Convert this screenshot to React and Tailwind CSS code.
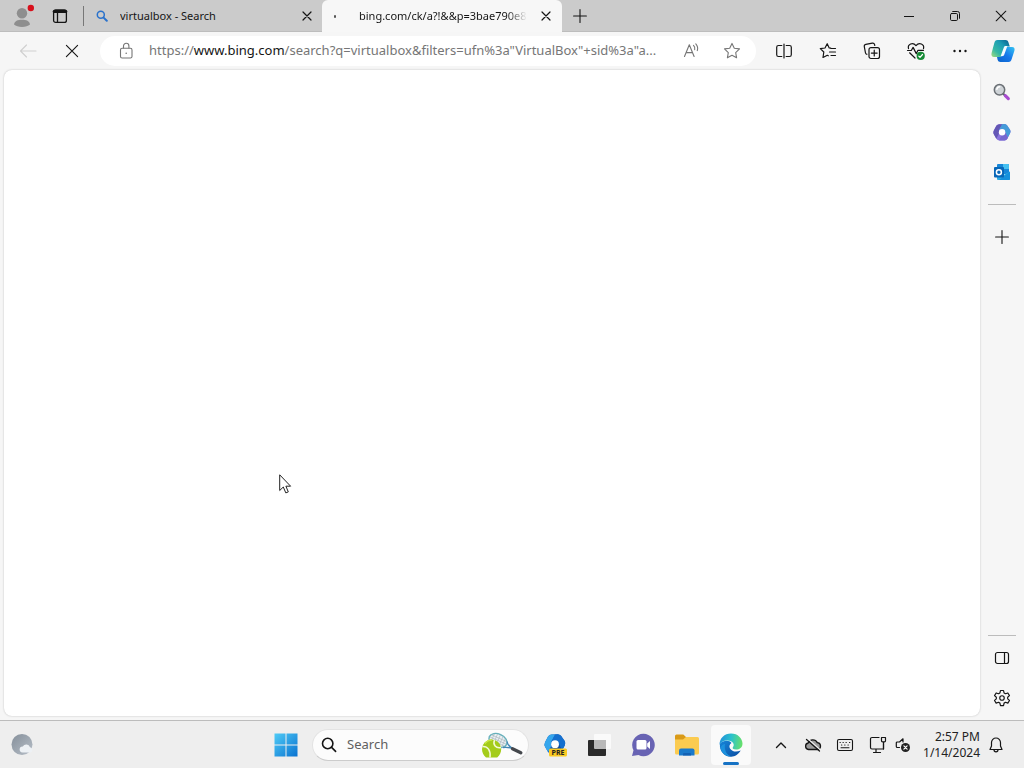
import React from "react";

const line = {
  fill: "none",
  stroke: "currentColor",
  strokeLinecap: "round",
  strokeLinejoin: "round",
};

function IconButton({ label, className = "", children }) {
  return (
    <button type="button" aria-label={label} className={`flex shrink-0 items-center justify-center ${className}`}>
      {children}
    </button>
  );
}

function CloseGlyph({ className = "h-2.5 w-2.5", weight = 1.2 }) {
  return (
    <svg viewBox="0 0 10 10" className={className} {...line} strokeWidth={weight}>
      <path d="M1 1 9 9M9 1 1 9" />
    </svg>
  );
}

function PlusGlyph() {
  return (
    <svg viewBox="0 0 14 14" className="h-3.5 w-3.5" {...line} strokeWidth="1.1">
      <path d="M7 .6V13.4M.6 7H13.4" />
    </svg>
  );
}

function ProfileIcon() {
  return (
    <svg viewBox="0 0 24 24" className="ml-0.5 h-6 w-6">
      <circle cx="11" cy="9.2" r="5.2" fill="#8e8e8e" />
      <path d="M3 20.500c.5-3.600 3.700-4.800 8-4.800s7.500 1.200 8 4.800c-1.800 1.500-4.600 2.500-8 2.500s-6.200-1-8-2.500Z" fill="#8e8e8e" />
      <circle cx="19.800" cy="4" r="3.200" fill="#d8101c" />
    </svg>
  );
}

function TabActionsIcon() {
  return (
    <svg viewBox="0 0 16 16" className="h-4 w-4" {...line} strokeWidth="1.300">
      <rect x="1.600" y="1.800" width="12.800" height="12.600" rx="2" />
      <path d="M2.200 3.500H13.800" strokeWidth="3" />
      <path d="M5.500 4V14.200" />
    </svg>
  );
}

function BlueSearchIcon() {
  return (
    <svg viewBox="0 0 12 12" className="h-3 w-3 shrink-0" fill="none" stroke="#2a72cc" strokeLinecap="round">
      <circle cx="4.800" cy="4.800" r="3.500" strokeWidth="1.500" />
      <path d="M7.600 7.600 10.800 10.800" strokeWidth="2" />
    </svg>
  );
}

function CopilotIcon() {
  return (
    <svg viewBox="0 0 24 24" className="h-6 w-6">
      <defs>
        <linearGradient id="cpA" x1="0" y1="1" x2="1" y2="0">
          <stop offset="0" stopColor="#a5dc7b" />
          <stop offset=".3" stopColor="#35b9a5" />
          <stop offset=".65" stopColor="#1c9cb4" />
          <stop offset="1" stopColor="#075a8c" />
        </linearGradient>
        <linearGradient id="cpB" x1="0" y1="1" x2="1" y2="0">
          <stop offset="0" stopColor="#0a63c9" />
          <stop offset=".5" stopColor="#1677ea" />
          <stop offset="1" stopColor="#35c4f2" />
        </linearGradient>
      </defs>
      <path d="M17.600 23H9.500c-1.600 0-2.400-.700-2.900-2.200L5.800 17H12l3-9h6c2.300 0 3 1.600 2.400 3.700L20.700 20c-.5 1.800-1.400 3-3.100 3Z" fill="url(#cpB)" />
      <path d="M6.400 1H14.500c1.600 0 2.400.7 2.900 2.200l1.400 4.300H14l-3.200 8.700c-.5 1.300-1.300 1.800-2.800 1.800H3C.7 18 0 16.200.6 14L3.300 4C3.800 2.200 4.700 1 6.400 1Z" fill="url(#cpA)" />
      <path d="M12.900 8.200c.3-.9.9-1.300 1.900-1.300h1.600l-3.100 8.700c-.4 1.200-1.200 1.700-2.300 1.700H9.600Z" fill="#f5fbff" />
    </svg>
  );
}

function MagnifierIcon() {
  return (
    <svg viewBox="0 0 18 18" className="h-[18px] w-[18px]">
      <path d="m9.800 10.200 3 3" stroke="#59606b" strokeWidth="2" />
      <path d="m12.300 12.600 3 3" stroke="#a84cd0" strokeWidth="3.200" strokeLinecap="round" />
      <circle cx="6.500" cy="6.800" r="5.200" fill="#ced3d7" stroke="#6b7075" strokeWidth="1.500" />
      <path d="M3.800 6.300a3 3 0 0 1 3-2.500" stroke="#fff" strokeWidth="1.400" fill="none" strokeLinecap="round" />
    </svg>
  );
}

function Microsoft365Icon({ blue = false }) {
  return (
    <>
      <path d="M6.500 1.200 12 1q1.500 0 2.800 1.400L18 7q1 1.800 0 3.800L15.200 16.500q-1.200 1.800-3 2H6.500q-1.800-.2-3-2L.9 12q-1-1.800 0-4L3.500 3Q4.700 1.200 6.500 1.200Z" fill={blue ? "#135fbd" : "#8a74dd"} />
      <path d="M6.500 1.200H10L6.600 7 6 12 3.500 16.500.9 12q-1-1.800 0-4L3.500 3Q4.700 1.200 6.500 1.200Z" fill={blue ? "#35a6ec" : "#6457b5"} />
      <path d="M9.500 1.200 12 1q1.500 0 2.800 1.400L18 7q1 1.800 0 3.800l-2.400 4.400-2.700-5.400L9 6.200 6.300 7.500Z" fill={blue ? "#1570cf" : "#459bd8"} />
      <path d="m13 9.600 2.600 5.600-.4 1.300q-1.200 1.800-3 2H6.500L9 13.300Z" fill={blue ? "#0d4da6" : "#7769d0"} />
      <circle cx="9.600" cy="9.700" r="3.400" fill="#fff" />
    </>
  );
}

function OutlookIcon() {
  return (
    <svg viewBox="0 0 18 18" className="h-[18px] w-[18px]">
      <rect x="4" y="1" width="12" height="10" rx="1" fill="#1686d8" />
      <path d="M10 1h5a1 1 0 0 1 1 1v4h-6Z" fill="#45c0f1" />
      <path d="M4 8.500 10.500 12 17 8.500V16a1 1 0 0 1-1 1H5a1 1 0 0 1-1-1Z" fill="#2caae4" />
      <path d="M17 8.500V16a1 1 0 0 1-1 1H6Z" fill="#1590dc" />
      <rect x="1" y="4" width="10" height="10.500" rx="1" fill="#0867b8" />
      <circle cx="5.900" cy="9.200" r="2.500" fill="none" stroke="#fff" strokeWidth="1.500" />
    </svg>
  );
}

function BrowserTabs() {
  return (
    <header className="flex h-8 items-stretch bg-[#cbcbcb] shadow-[inset_0_-1px_0_#bdbdbd]">
      <IconButton label="Profile" className="w-11">
        <ProfileIcon />
      </IconButton>
      <IconButton label="Tab actions menu" className="w-8">
        <TabActionsIcon />
      </IconButton>
      <div className="my-1.5 ml-[7px] w-px bg-[#777]" />
      <div role="tablist" className="flex min-w-0">
        <div className="flex w-[238px] min-w-0 items-center pl-3">
          <button type="button" role="tab" aria-selected="false" className="flex min-w-0 flex-1 items-center gap-3 text-left text-[11px]">
            <BlueSearchIcon />
            <span className="truncate">virtualbox - Search</span>
          </button>
          <IconButton label="Close virtualbox - Search" className="w-[30px]">
            <CloseGlyph />
          </IconButton>
        </div>
        <div className="flex w-60 min-w-0 items-center rounded-t-md bg-[#f7f7f7] pl-3">
          <button type="button" role="tab" aria-selected="true" className="flex min-w-0 flex-1 items-center gap-[23px] text-left text-[11px]">
            <span className="h-[3px] w-0.5 shrink-0 rounded-full bg-[#555]" />
            <span className="overflow-hidden whitespace-nowrap [mask-image:linear-gradient(to_right,black_88%,transparent)]">
              bing.com/ck/a?!&amp;&amp;p=3bae790e8
            </span>
          </button>
          <IconButton label="Close bing.com" className="w-8">
            <CloseGlyph />
          </IconButton>
        </div>
      </div>
      <IconButton label="New tab" className="w-9">
        <PlusGlyph />
      </IconButton>
      <div className="ml-auto flex">
        <IconButton label="Minimize" className="w-[46px]">
          <svg viewBox="0 0 10 10" className="h-2.5 w-2.5" stroke="currentColor">
            <path d="M0 5.500H10" />
          </svg>
        </IconButton>
        <IconButton label="Restore" className="w-[46px]">
          <svg viewBox="0 0 12 12" className="h-3 w-3" {...line}>
            <rect x="1.500" y="3.500" width="7" height="7" rx="1.200" />
            <path d="M3.700 1.500H8.500a2 2 0 0 1 2 2V8.300" />
          </svg>
        </IconButton>
        <IconButton label="Close window" className="w-[46px]">
          <CloseGlyph className="h-3 w-3" weight={0.9} />
        </IconButton>
      </div>
    </header>
  );
}

function AddressBar() {
  const url = 'https://www.bing.com/search?q=virtualbox&filters=ufn%3a"VirtualBox"+sid%3a"a...';
  return (
    <div className="flex h-[30px] min-w-0 flex-1 items-center rounded-full bg-white pl-[15px] text-[#767676]">
      <IconButton label="View site information" className="w-[22px]">
        <svg viewBox="0 0 16 18" className="h-[18px] w-4" {...line} strokeWidth="1.100">
          <rect x="2.500" y="6.300" width="11.500" height="9.700" rx="1.600" />
          <path d="M5.500 6V4a2.700 2.700 0 0 1 5.400 0V6" />
          <circle cx="8.200" cy="11.200" r=".8" fill="currentColor" stroke="none" />
        </svg>
      </IconButton>
      <label className="relative ml-3 min-w-0 flex-1 text-[13px]">
        <span className="block overflow-hidden whitespace-nowrap">
          https://<span className="text-[#151515]">www.bing.com</span>
          {'/search?q=virtualbox&filters=ufn%3a"VirtualBox"+sid%3a"a...'}
        </span>
        <input
          aria-label="Address and search bar"
          defaultValue={url}
          className="absolute inset-0 w-full bg-white opacity-0 outline-none focus:opacity-100"
        />
      </label>
      <IconButton label="Read aloud" className="w-10">
        <svg viewBox="0 0 18 18" className="h-[18px] w-[18px]" {...line} strokeWidth="1.100">
          <path d="M1.500 14.500 6.300 2.800 11.100 14.500M3.100 10.600H9.500" />
          <path d="M10.500 3.400a4.200 4.200 0 0 1 1.200 4.200M12.800 1.800a7 7 0 0 1 1.500 6.800" />
        </svg>
      </IconButton>
      <IconButton label="Add to favorites" className="mr-1 w-10">
        <svg viewBox="0 0 18 18" className="h-[18px] w-[18px]" {...line} strokeWidth="1.100">
          <path d="m9 1.400 2.300 4.800 5.200.7-3.800 3.700.9 5.200L9 13.300l-4.600 2.500.9-5.200L1.500 6.900l5.200-.7Z" />
        </svg>
      </IconButton>
    </div>
  );
}

const toolIcons = [
  [
    "Split screen",
    <svg viewBox="0 0 18 18" className="h-[18px] w-[18px]" {...line} strokeWidth="1.200">
      <path d="M9 2V16M6.800 3.500H3.500a1.800 1.800 0 0 0-1.800 1.800v7.400a1.800 1.800 0 0 0 1.800 1.800h3.300M11.200 3.500h3.300a1.800 1.800 0 0 1 1.800 1.800v7.400a1.800 1.800 0 0 1-1.800 1.800h-3.300" />
    </svg>,
  ],
  [
    "Favorites",
    <svg viewBox="0 0 18 18" className="h-[18px] w-[18px]" {...line} strokeWidth="1.200">
      <path d="M11.700 6.200 10.200 5.900 8.200 1.700 6 6 1.300 6.600l3.500 3.400-.8 5.500 4.300-2.200 1 .5M12 6.500H16.500M10.500 10H16.500M12 13.500H16.500" />
    </svg>,
  ],
  [
    "Collections",
    <svg viewBox="0 0 18 18" className="h-[18px] w-[18px]" {...line} strokeWidth="1.200">
      <rect x="6" y="5.700" width="10.500" height="10.800" rx="2" />
      <path d="M11.250 8.200v5.800M8.350 11.100h5.800M3.900 12.300l-.7-.4a2 2 0 0 1-.8-1.400L1.300 4.700a2 2 0 0 1 1.500-2.300l6.500-1.300a2 2 0 0 1 2.300 1.500l.2.900" />
    </svg>,
  ],
  [
    "Browser essentials",
    <svg viewBox="0 0 20 20" className="h-5 w-5" {...line} strokeWidth="1.200">
      <path d="M2.500 7.600C1.300 3.300 6.800.8 10 4.600 13.200.8 18.700 3.300 17.500 7.600M3.600 11.800 9 17" />
      <path d="M1.500 9.500H5.300L7.100 6.400l3.200 6.200L12 9.300h5.500" />
      <circle cx="14.700" cy="14.900" r="4.100" fill="#168b36" stroke="none" />
      <path d="m12.800 15.200 1.200 1.200 2.500-2.900" stroke="#fff" />
    </svg>,
  ],
  [
    "Settings and more",
    <svg viewBox="0 0 16 16" className="h-4 w-4" fill="currentColor">
      <circle cx="2.500" cy="8" r="1.200" />
      <circle cx="8" cy="8" r="1.200" />
      <circle cx="13.500" cy="8" r="1.200" />
    </svg>,
  ],
];

function Toolbar() {
  return (
    <div className="flex h-[38px] items-center pl-1.5">
      <IconButton label="Back" className="w-11 text-[#cfcfcf]">
        <svg viewBox="0 0 18 18" className="h-[18px] w-[18px]" {...line} strokeWidth="1.100">
          <path d="M17 9H1.500M7.500 3 1.500 9l6 6" />
        </svg>
      </IconButton>
      <IconButton label="Stop loading" className="mr-1.5 w-11">
        <CloseGlyph className="h-3.5 w-3.5" weight={0.8} />
      </IconButton>
      <AddressBar />
      <div className="ml-1.5 flex">
        {toolIcons.map(([label, icon]) => (
          <IconButton key={label} label={label} className="w-11">
            {icon}
          </IconButton>
        ))}
      </div>
      <IconButton label="Copilot" className="w-[42px]">
        <CopilotIcon />
      </IconButton>
    </div>
  );
}

function Sidebar() {
  return (
    <aside className="flex w-11 flex-col items-center pt-0.5 pb-0.5">
      <IconButton label="Search" className="h-10 w-10">
        <MagnifierIcon />
      </IconButton>
      <IconButton label="Microsoft 365" className="h-10 w-10">
        <svg viewBox="0 0 19 19" className="h-[18px] w-[18px]">
          <Microsoft365Icon />
        </svg>
      </IconButton>
      <IconButton label="Outlook" className="h-10 w-10">
        <OutlookIcon />
      </IconButton>
      <div className="my-3 h-px w-7 bg-[#bcbcbc]" />
      <IconButton label="Customize sidebar" className="h-10 w-10">
        <PlusGlyph />
      </IconButton>
      <div className="mt-auto mb-0.5 h-px w-7 bg-[#bcbcbc]" />
      <IconButton label="Hide sidebar" className="h-10 w-10">
        <svg viewBox="0 0 16 16" className="h-4 w-4" {...line} strokeWidth="1.200">
          <rect x="1.500" y="2.500" width="13" height="11" rx="2" />
          <path d="M10.500 2.500V13.500" />
        </svg>
      </IconButton>
      <IconButton label="Sidebar settings" className="h-10 w-10">
        <svg viewBox="0 0 20 20" className="h-[18px] w-[18px]" {...line} strokeWidth="1.300">
          <path d="M8.300 1.700h3.400l.6 2.700 1.600.9 2.600-.9 1.800 3-2 1.800v1.700l2 1.800-1.800 3-2.600-.9-1.600.9-.6 2.700H8.300l-.6-2.700-1.600-.9-2.600.9-1.800-3 2-1.800V9.200l-2-1.800 1.800-3 2.600.9 1.600-.9Z" />
          <circle cx="10" cy="10" r="2.500" />
        </svg>
      </IconButton>
    </aside>
  );
}

function TennisArt() {
  return (
    <svg viewBox="0 0 44 28" className="h-7 w-11">
      <g transform="rotate(24 18 9.500)">
        <ellipse cx="18" cy="9.500" rx="9.500" ry="6.500" fill="#e9eff2" stroke="#63b0bb" strokeWidth="1.400" />
        <path d="M12 5v9M15 3.500v12M18 3.200v12.600M21 3.500v12M24 5v9M9.500 7h17M9 9.500h18M9.500 12h17" stroke="#a9b6bd" strokeWidth=".6" />
      </g>
      <path d="M27 10.500c.5 3 2 5 5.500 7M23 16.500c3-.3 6-.3 9.500 1" fill="none" stroke="#4486b4" strokeWidth="1.400" />
      <path d="m32.500 17.800 8.300 4" stroke="#45484d" strokeWidth="3.400" strokeLinecap="round" />
      <path d="M2 18a9.600 9.600 0 0 1 19.200 0c0 3.500-1.500 6.500-4 8.500H6C3.500 24.500 2 21.500 2 18Z" fill="#a4cc1a" />
      <path d="M2.500 15.500c5-.5 8.500 4 7.500 11M14.500 9c-2 5 1.500 8.500 6.500 7.500" fill="none" stroke="#f4f9d6" strokeWidth="1.500" />
      <path d="M5 12.500a9 9 0 0 1 7-3.500" fill="none" stroke="#c9e746" strokeWidth="1.500" />
    </svg>
  );
}

function EdgeIcon() {
  return (
    <svg viewBox="0 0 24 24" className="h-6 w-6">
      <defs>
        <linearGradient id="edTop" x1="0" y1=".3" x2="1" y2=".4">
          <stop offset="0" stopColor="#218fda" />
          <stop offset=".5" stopColor="#2bc1cd" />
          <stop offset="1" stopColor="#67e06b" />
        </linearGradient>
        <linearGradient id="edLow" x1="0" y1="0" x2="1" y2="1">
          <stop offset="0" stopColor="#1685d8" />
          <stop offset="1" stopColor="#0b4da2" />
        </linearGradient>
      </defs>
      <path d="M1 10.500C4 7.500 10 6.500 12.500 10c-2 1-2.700 3.500-1.500 5.500 2 3.200 6 4 10.700 2.100C19.500 21.500 15.800 24 11.800 23.800 5.200 23.500 0 18 1 10.500Z" fill="url(#edLow)" />
      <path d="M6 11c-1 6 1.500 11 6.500 12.500C7 23.500 2.500 20 1.500 15c1-3 2.500-4 4.500-4Z" fill="#1c91dd" />
      <path d="M.5 12C.5 5 5.500.4 12 .4c7 0 11.500 5 11.500 10.200 0 4-3 6-6.500 6-3 0-4-1.300-3-2.500 1.300-1.600 1-4.100-1.500-5.500C8.200 6.300 2 7.800.5 12Z" fill="url(#edTop)" />
    </svg>
  );
}

const pinned = [
  [
    "Microsoft 365 Preview",
    <svg viewBox="0 0 26 26" className="h-[26px] w-[26px]">
      <g transform="translate(2 1) scale(1.150)">
        <Microsoft365Icon blue />
      </g>
      <rect x="7" y="16.500" width="18" height="8" rx="1.500" fill="#fbca23" />
      <text x="16" y="23.400" textAnchor="middle" fontSize="7" fontWeight="700" fill="#222" fontFamily="Open Sans, sans-serif">PRE</text>
    </svg>,
  ],
  [
    "Task view",
    <svg viewBox="0 0 26 24" className="h-6 w-[26px]">
      <rect x="8" y="1" width="17" height="15" rx="1" fill="#fafafa" />
      <rect x="2" y="7" width="18" height="16" rx="1" fill="#2a2a2a" />
      <path d="M8 7h12v9H9a1 1 0 0 1-1-1Z" fill="#b9b9b9" />
    </svg>,
  ],
  [
    "Chat",
    <svg viewBox="0 0 24 24" className="h-6 w-6">
      <path d="M12.500.8a11.200 11.200 0 1 1-5 21.200L1 23l1.500-5.700A11.200 11.200 0 0 1 12.500.8Z" fill="#6863b3" />
      <rect x="5.500" y="7" width="10" height="9.500" rx="1.500" fill="#fff" />
      <path d="m16.200 10.500 2.800-2.500v8l-2.800-2.500Z" fill="#fff" />
    </svg>,
  ],
  [
    "File Explorer",
    <svg viewBox="0 0 26 24" className="h-6 w-[26px]">
      <path d="M1 3a1.500 1.500 0 0 1 1.500-1.500h6.800L12 4v6H1Z" fill="#d99a18" />
      <path d="M1 6.500h8L12 4h11.500A1.500 1.500 0 0 1 25 5.500V20a1.500 1.500 0 0 1-1.500 1.500h-21A1.500 1.500 0 0 1 1 20Z" fill="#fbcb50" />
      <path d="M5 22.500v-5a2 2 0 0 1 2-2h11.500a2 2 0 0 1 2 2v5Z" fill="#1979cb" />
      <path d="M9 22.500V21q0-1 1-1h6q1 0 1 1v1.500Z" fill="#1260b3" />
    </svg>,
  ],
];

function SystemTray() {
  return (
    <div className="flex shrink-0 items-center pl-3">
      <IconButton label="Show hidden icons" className="h-10 w-8">
        <svg viewBox="0 0 12 12" className="h-3 w-3" {...line} strokeWidth="1.400">
          <path d="M1.500 8.500 6 4l4.500 4.500" />
        </svg>
      </IconButton>
      <IconButton label="OneDrive" className="h-10 w-8">
        <svg viewBox="0 0 18 16" className="h-4 w-[18px]" {...line} strokeWidth="1.300">
          <path d="M4.500 12.500a3.300 3.300 0 0 1-.3-6.500A5 5 0 0 1 13.300 5.600a3.500 3.500 0 0 1 .5 6.900Z" fill="#9b9b9b" />
          <path d="m4 2 13 11.500" stroke="#eee" strokeWidth="1.300" />
          <path d="m2.500 2.500 13 11.500" />
        </svg>
      </IconButton>
      <IconButton label="Touch keyboard" className="h-10 w-8">
        <svg viewBox="0 0 18 14" className="h-3.5 w-[18px]" {...line} strokeWidth="1.100">
          <rect x="1.500" y="1.500" width="15" height="11" rx="1.500" />
          <path d="M4 4.500h.3M7 4.500h.3M10 4.500h.3M13.500 4.500h.3M5.500 7h.3M8.700 7h.3M12 7h.3M5 9.800H13" />
        </svg>
      </IconButton>
      <button type="button" aria-label="Network and volume" className="flex h-10 items-center gap-2 px-2">
        <svg viewBox="0 0 18 18" className="h-[18px] w-[18px]" {...line} strokeWidth="1.200">
          <path d="M10 1.500H3A1.500 1.500 0 0 0 1.500 3v8.500A1.500 1.500 0 0 0 3 13h11.500V7.500M7 13v3.500M4.500 16.500h7" />
          <path d="M12.500 1.500h4v3.300a1 1 0 0 1-1 1h-2a1 1 0 0 1-1-1ZM14.500 6v7" />
        </svg>
        <svg viewBox="0 0 16 16" className="h-4 w-4" {...line} strokeWidth="1.200">
          <path d="M8 5V1.800L4.500 5H2.300a1 1 0 0 0-1 1v3.500a1 1 0 0 0 1 1H4.500" />
          <circle cx="10.500" cy="10.500" r="4.500" fill="#222" stroke="none" />
          <path d="m8.900 8.900 3.200 3.200m0-3.200-3.200 3.200" stroke="#fff" />
        </svg>
      </button>
      <button type="button" aria-label="Date and time" className="ml-1 text-right text-xs leading-4 text-[#222]">
        <span className="block">2:57 PM</span>
        <span className="block">1/14/2024</span>
      </button>
      <IconButton label="Notifications" className="mr-1 h-10 w-8">
        <svg viewBox="0 0 16 18" className="h-[18px] w-4" {...line} strokeWidth="1.200">
          <path d="M8 2a4.500 4.500 0 0 0-4.500 4.500V10L2 13.500h12L12.500 10V6.500A4.500 4.500 0 0 0 8 2ZM6 13.800a2 2 0 0 0 4 0" />
        </svg>
      </IconButton>
    </div>
  );
}

function Taskbar() {
  return (
    <footer className="flex h-12 items-center border-t border-[#bcbcbc] bg-[#eeeeee] pr-2">
      <div className="flex flex-1">
        <IconButton label="Weather" className="w-11">
          <svg viewBox="0 0 24 24" className="h-6 w-6">
            <defs>
              <linearGradient id="moon" x1="0" y1="0" x2="1" y2="1">
                <stop offset="0" stopColor="#858f9a" />
                <stop offset="1" stopColor="#b7bfc8" />
              </linearGradient>
            </defs>
            <circle cx="12" cy="11.500" r="10.500" fill="url(#moon)" />
            <path d="M12.500 19.500a3 3 0 0 1 .3-6 4 4 0 0 1 7.200.7 2.700 2.700 0 0 1 .3 5.300Z" fill="#edf1f5" />
          </svg>
        </IconButton>
      </div>
      <div className="flex items-center">
        <IconButton label="Start" className="h-10 w-11">
          <svg viewBox="0 0 24 24" className="h-6 w-6">
            <defs>
              <linearGradient id="win" gradientUnits="userSpaceOnUse" x1="0" y1="0" x2="24" y2="24">
                <stop offset="0" stopColor="#50cdf7" />
                <stop offset="1" stopColor="#0870cf" />
              </linearGradient>
            </defs>
            <path d="M.5.500h11v11H.5ZM12.500.500h11v11h-11ZM.5 12.500h11v11H.5ZM12.500 12.500h11v11h-11Z" fill="url(#win)" />
          </svg>
        </IconButton>
        <label className="mx-1 flex h-8 w-[217px] items-center rounded-full border border-[#e3e3e3] border-b-[#cccccc] bg-[#fcfcfc] pl-2">
          <svg viewBox="0 0 16 16" className="h-4 w-4 shrink-0" {...line} strokeWidth="1.600">
            <circle cx="6.700" cy="6.500" r="5.200" />
            <path d="m10.600 10.400 4 4" />
          </svg>
          <input
            type="search"
            aria-label="Search"
            placeholder="Search"
            className="ml-2.5 min-w-0 flex-1 bg-transparent text-[13px] outline-none placeholder:text-[#606060]"
          />
          <span className="mr-1 shrink-0">
            <TennisArt />
          </span>
        </label>
        {pinned.map(([label, icon]) => (
          <IconButton key={label} label={label} className="h-10 w-11">
            {icon}
          </IconButton>
        ))}
        <IconButton label="Microsoft Edge" className="relative mx-0.5 h-10 w-10 rounded bg-[#fafafa]">
          <EdgeIcon />
          <span className="absolute bottom-0 left-3 h-[3px] w-4 rounded-full bg-[#1672c4]" />
        </IconButton>
      </div>
      <SystemTray />
    </footer>
  );
}

export default function App() {
  return (
    <div className="flex min-h-screen flex-col bg-[#f6f6f6] font-['Noto_Sans','Open_Sans',sans-serif] text-[#151515]">
      <BrowserTabs />
      <Toolbar />
      <div className="flex flex-1">
        <main className="relative mb-1 ml-1 flex-1 rounded-lg bg-white shadow-[0_0_2px_#bbbbbb]">
          <svg viewBox="0 0 14 21" className="absolute top-[404px] left-[275px] h-[21px] w-3.5">
            <path d="M.7.8V16.500L4.300 13l2.500 5.900 2.500-1L6.900 12.200h4.700Z" fill="#fff" stroke="#222" strokeLinejoin="round" />
          </svg>
        </main>
        <Sidebar />
      </div>
      <Taskbar />
    </div>
  );
}
